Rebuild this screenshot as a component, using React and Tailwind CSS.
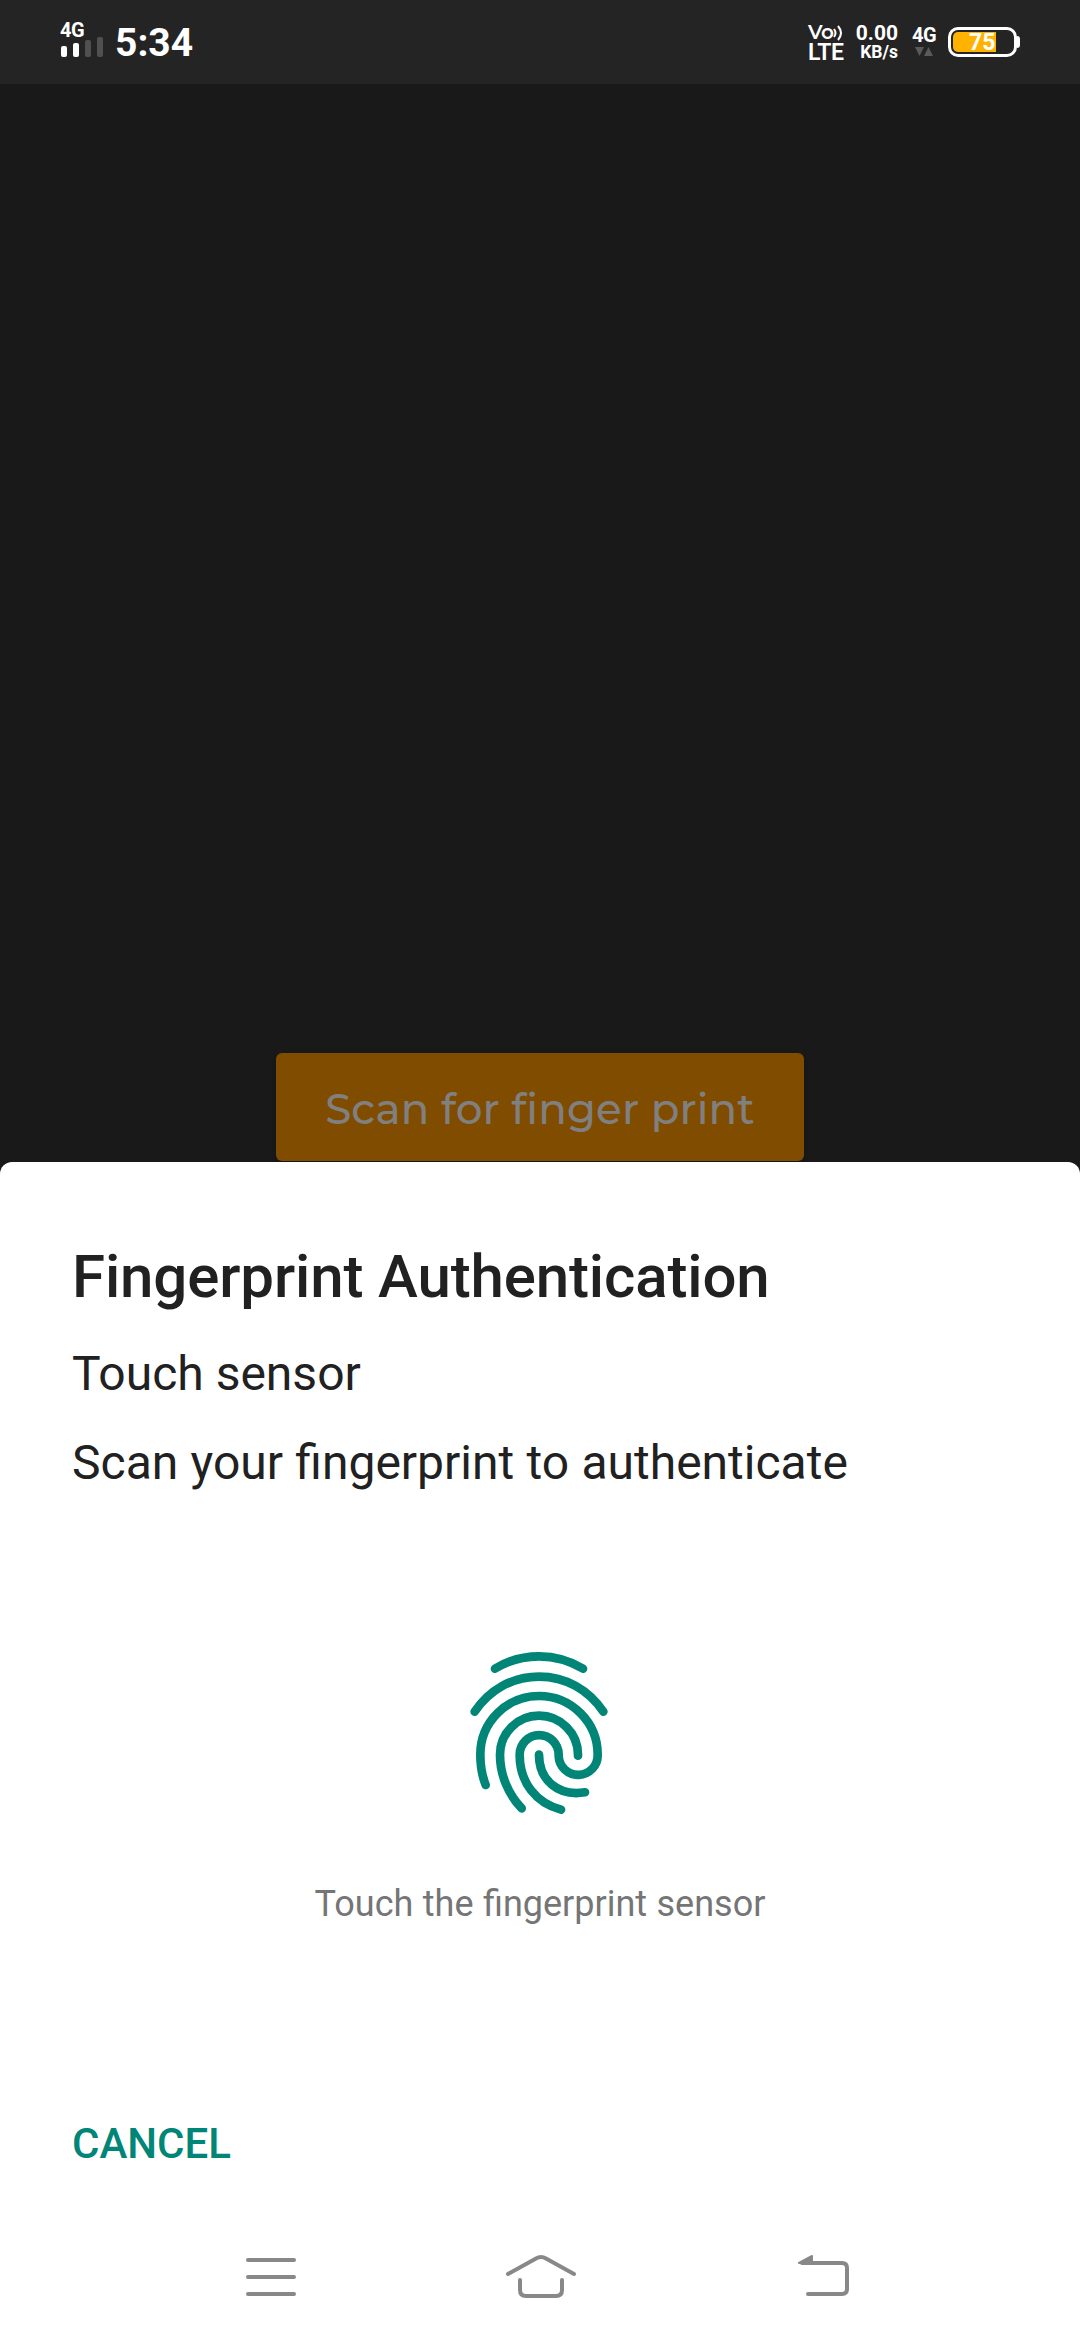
const Caret = ({ className, d }) => (
  <svg className={className} viewBox="0 0 9 9"><path d={d} fill="#5a5a5a" /></svg>
);

function StatusBar() {
  return (
    <header className="flex h-[84px] w-[1080px] shrink-0 items-start justify-between bg-[#242424] pl-[60px] pr-[60px] font-bold text-white">
      <div className="flex items-start">
        <div className="w-[43px] pt-[21px]">
          <div className="h-[16px] text-[20px] leading-[18px] tracking-[-0.5px]">4G</div>
          <div className="flex h-[20px] items-end gap-[6px] pl-px">
            <span className="h-[11px] w-[6px] rounded-[2px] bg-white" />
            <span className="h-[14px] w-[6px] rounded-[2px] bg-white" />
            <span className="h-[17px] w-[6px] rounded-[2px] bg-[#505050]" />
            <span className="h-[20px] w-[6px] rounded-[2px] bg-[#505050]" />
          </div>
        </div>
        <div className="ml-[12px] pt-[20px] text-[39px] leading-[46px]">5:34</div>
      </div>
      <div className="flex items-start">
        <div className="w-[47px] pt-[23px]">
          <div className="flex h-[20px]">
            <span className="font-['Montserrat',sans-serif] text-[20px] font-semibold leading-[18px] tracking-[-0.5px]">Vo</span>
            <svg className="mt-px h-[18px] w-[10px]" viewBox="0 0 10 18" fill="none" stroke="#fff" strokeWidth="2">
              <path d="M1 5Q4 9 1 13M5 2Q11 9 5 16" />
            </svg>
          </div>
          <div className="text-[23px] font-semibold leading-[19px] tracking-[-0.5px]">LTE</div>
        </div>
        <div className="w-[43px] pt-[24px] text-right">
          <div className="h-[19px] text-[21px] leading-[19px]">0.00</div>
          <div className="text-[17.5px] leading-[19px]">KB/s</div>
        </div>
        <div className="ml-[14px] w-[25px] pt-[27px]">
          <div className="h-[20px] text-[20px] leading-[17px] tracking-[-0.5px]">4G</div>
          <div className="flex pl-[3px]">
            <Caret className="size-[9px]" d="M0 0H9L4.5 9Z" />
            <Caret className="size-[9px]" d="M0 9H9L4.5 0Z" />
          </div>
        </div>
        <div className="ml-[11px] mt-[27px] flex items-center">
          <div className="relative h-[30px] w-[69px] rounded-[10px] border-[3px] border-white p-[2px]">
            <div className="h-full w-[43px] rounded-l-[5px] bg-[#ffb300]" />
            <span className="absolute left-[18px] top-px text-[23px] leading-[24px]">75</span>
          </div>
          <span className="h-[12px] w-[3px] rounded-r-[3px] bg-white" />
        </div>
      </div>
    </header>
  );
}

function FingerprintIcon() {
  return (
    <svg className="h-[220px] w-[200px]" viewBox="0 0 600 660" fill="none" stroke="#008577" strokeWidth="26" strokeLinecap="round">
      <path d="M165 146Q226 109 297 109T429 146" />
      <path d="M104 275C148 210 216 170 297 170S446 210 490 275" />
      <path d="M137 495C126 467 121 439 121 404A176 176 0 0 1 473 404A58 58 0 0 1 356 408V404A58.500 58.500 0 0 0 239 404C239 488 288 549 363 569" />
      <path d="M245 565C205 523 180 465 180 404A117 117 0 0 1 414 404V407" />
      <path d="M297 404C297 480 354 530 435 517" />
    </svg>
  );
}

function NavBar() {
  return (
    <nav className="flex h-[60px] items-start text-[#888]">
      <svg className="ml-[240px] h-[60px] w-[70px]" viewBox="0 0 70 60" fill="none" stroke="currentColor" strokeWidth="4" strokeLinecap="round">
        <path d="M8 15H54M8 32H54M8 49H54" />
      </svg>
      <svg className="ml-[190px] h-[60px] w-[90px]" viewBox="0 0 90 60" fill="none" stroke="currentColor" strokeWidth="4" strokeLinecap="round">
        <path d="M8 29L36 13.500Q41 10.500 46 13.500L74 29" />
        <path d="M20 35V45Q20 51 26 51H56Q62 51 62 45V35" />
      </svg>
      <svg className="ml-[200px] h-[60px] w-[70px]" viewBox="0 0 70 60" fill="none" stroke="currentColor" strokeWidth="4" strokeLinecap="round">
        <path d="M12 18H52Q57 18 57 23V44Q57 49 52 49H18" />
        <path d="M9 18L22 11V18Z" fill="currentColor" strokeWidth="2" strokeLinejoin="round" />
      </svg>
    </nav>
  );
}

export default function App() {
  return (
    <div className="flex h-[2340px] w-[1080px] flex-col overflow-hidden bg-[#191919] font-['Roboto',sans-serif]">
      <StatusBar />
      <main className="flex h-[1078px] shrink-0 flex-col items-center justify-end pb-px">
        <button className="h-[108px] w-[528px] whitespace-nowrap rounded-[6px] bg-[#804c00] pt-[5px] font-['Montserrat','Inter',sans-serif] text-[42px] font-medium tracking-[0.16px] text-[#808080] shadow-md [font-variant-ligatures:none]">
          Scan for finger print
        </button>
      </main>
      <section className="flex grow flex-col rounded-t-[12px] bg-white text-[#212121]">
        <div className="px-[72px] pt-[80px]">
          <h1 className="text-[60px] font-medium leading-[70px] tracking-[-0.13px]">Fingerprint Authentication</h1>
          <p className="mt-[34px] text-[48px] leading-[56px]">Touch sensor</p>
          <p className="mt-[33px] text-[48px] leading-[56px] [word-spacing:0.4px]">Scan your fingerprint to authenticate</p>
        </div>
        <div className="flex flex-col items-center pt-[129px]">
          <FingerprintIcon />
          <p className="mt-[43px] text-[36px] leading-[42px] text-[#757575] [word-spacing:0.5px]">Touch the fingerprint sensor</p>
        </div>
        <button className="ml-[72px] mt-[194px] self-start text-[42px] font-medium leading-[50px] text-[#008577]">CANCEL</button>
        <div className="mt-[76px]"><NavBar /></div>
      </section>
    </div>
  );
}
